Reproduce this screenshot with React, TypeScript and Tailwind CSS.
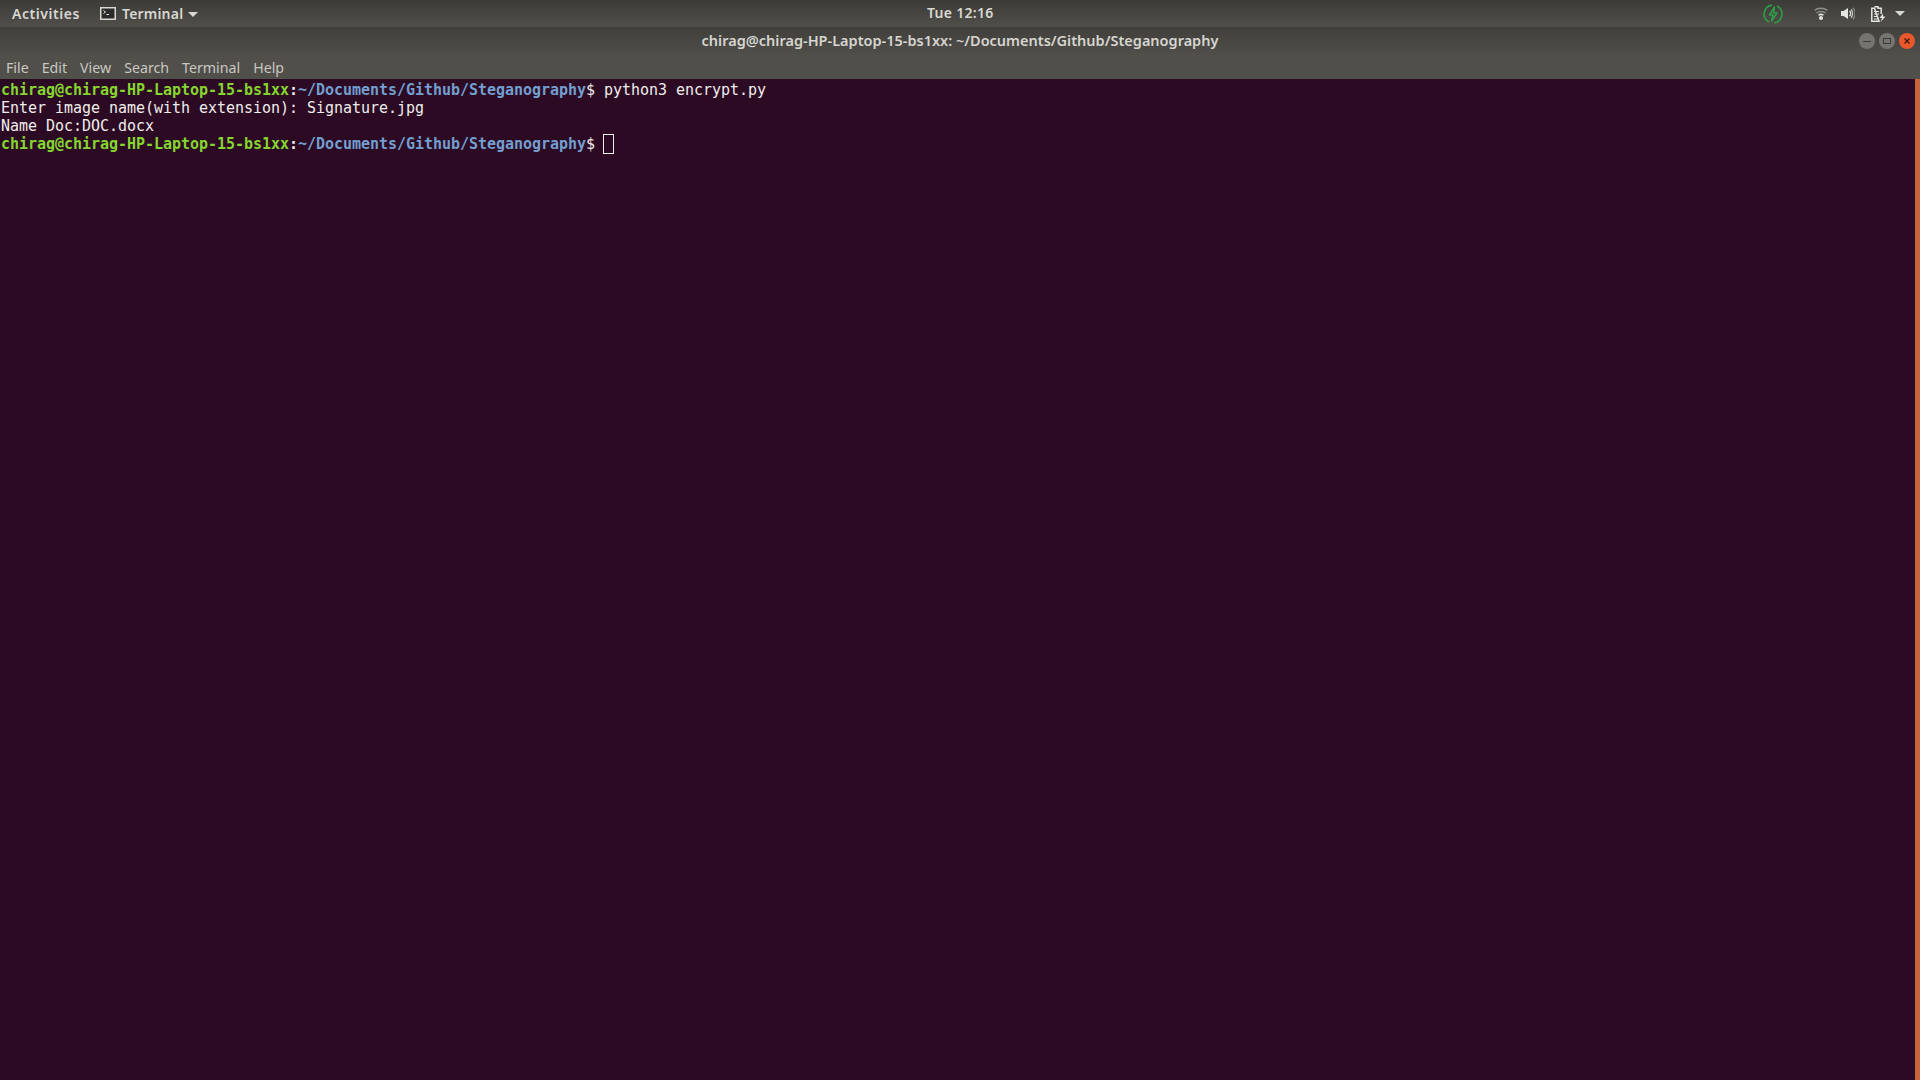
import React from 'react';

const mono = "font-['DejaVu_Sans_Mono',monospace] text-[15px] leading-[18px] tracking-[-0.03px] whitespace-pre";

function Prompt() {
  return (
    <>
      <span className="font-bold text-[#85d530]">chirag@chirag-HP-Laptop-15-bs1xx</span>
      <span className="font-bold text-[#eeeeec]">:</span>
      <span className="font-bold text-[#729fcf]">~/Documents/Github/Steganography</span>
      <span>$ </span>
    </>
  );
}

function TerminalIcon() {
  return (
    <svg width="16" height="13" viewBox="0 0 16 13" className="mr-[6px]">
      <rect x="0.75" y="0.75" width="14.5" height="11.5" fill="#2b2b29" stroke="#d8d8d4" strokeWidth="1.5" />
      <path d="M3.500 3.500l2 1.500-2 1.500M6.500 7.500h2.500" fill="none" stroke="#e8e8e4" strokeWidth="1" />
    </svg>
  );
}

function WifiIcon() {
  return (
    <svg width="14" height="13" viewBox="0 0 14 13">
      <path d="M0.500 3.500C4 0.500 10 0.500 13.500 3.500" fill="none" stroke="#8f8f8b" strokeWidth="1.500" />
      <path d="M2.500 6C5 4 9 4 11.500 6" fill="none" stroke="#8f8f8b" strokeWidth="1.500" />
      <path d="M4.500 8.200C6 7.200 8 7.200 9.500 8.200" fill="none" stroke="#e4e4e0" strokeWidth="1.500" />
      <circle cx="7" cy="11" r="2" fill="#e4e4e0" />
    </svg>
  );
}

function VolumeIcon() {
  return (
    <svg width="14" height="13" viewBox="0 0 14 13">
      <path d="M0 4h2.500L7 1v11L2.500 9H0z" fill="#e4e4e0" />
      <path d="M8.500 4a3.200 3.200 0 0 1 0 5" fill="none" stroke="#e4e4e0" strokeWidth="1.300" />
      <path d="M10 2.500a6 6 0 0 1 0 8" fill="none" stroke="#d0d0cc" strokeWidth="1.300" />
      <path d="M11.800 0.800a8.500 8.500 0 0 1 0 11.400" fill="none" stroke="#85857f" strokeWidth="1.300" />
    </svg>
  );
}

function BatteryIcon() {
  return (
    <svg width="15" height="16" viewBox="0 0 15 16">
      <path d="M3.500 0.800h3.500v1.500h3.200V8M8 15.200H0.800V2.300h2.700z" fill="none" stroke="#e4e4e0" strokeWidth="1.500" />
      <path d="M3 5.500h5M3 8h5M3 10.500h4M3 13h4" stroke="#e4e4e0" strokeWidth="1.100" />
      <path d="M12 7.500l-3.500 4.500H11l-1.500 4 5-5.500H12z" fill="#e4e4e0" />
    </svg>
  );
}

function BoltIcon() {
  return (
    <svg width="20" height="20" viewBox="0 0 20 20">
      <path d="M9 1.100A9 9 0 0 0 6 18M11 18.900A9 9 0 0 0 14 2" fill="none" stroke="#2e9e46" strokeWidth="1.600" />
      <path d="M11.500 3L6.500 11h3.500l-1.500 6 5.500-8h-3.500z" fill="none" stroke="#2e9e46" strokeWidth="1.500" strokeLinejoin="round" />
    </svg>
  );
}

function Caret() {
  return <span className="h-0 w-0 border-x-[5px] border-t-[5px] border-x-transparent border-t-[#d8d8d2]" />;
}

export default function App() {
  return (
    <div className="relative h-[1080px] w-[1920px] overflow-hidden bg-[#2d0a23]">
      {/* Top bar */}
      <div className="relative flex h-[27px] items-center bg-gradient-to-b from-[#3c3b37] to-[#504f4a] pr-[15px] font-['Noto_Sans',sans-serif] text-[14px] font-semibold text-[#d8d8d2]">
        <span className="ml-[12px] tracking-[0.55px]">Activities</span>
        <span className="ml-[20px] flex items-center">
          <TerminalIcon />
          <span className="tracking-[0.2px]">Terminal</span>
          <span className="ml-[5px] mt-[2px] flex"><Caret /></span>
        </span>
        <span className="absolute left-[927px] top-[2px] tracking-[0.3px]">Tue 12:16</span>
        <div className="ml-auto flex items-center">
          <BoltIcon />
          <span className="ml-[31px] flex"><WifiIcon /></span>
          <span className="ml-[13px] flex"><VolumeIcon /></span>
          <span className="ml-[16px] flex"><BatteryIcon /></span>
          <span className="ml-[9px] flex"><Caret /></span>
        </div>
      </div>

      {/* Title bar */}
      <div className="relative flex h-[29px] items-center justify-center bg-gradient-to-b from-[#403f3b] to-[#504f4a] font-['Noto_Sans',sans-serif] text-[14.5px] font-semibold text-[#d6d5cf]">
        <span className="mt-[-2px]">chirag@chirag-HP-Laptop-15-bs1xx: ~/Documents/Github/Steganography</span>
        <div className="absolute right-[5px] top-[6px] flex gap-[4px]">
          <span className="flex h-[16px] w-[16px] items-center justify-center rounded-full bg-[#75746f]">
            <span className="h-[1px] w-[8px] bg-[#3a3a37]" />
          </span>
          <span className="flex h-[16px] w-[16px] items-center justify-center rounded-full bg-[#75746f]">
            <span className="h-[6px] w-[8px] border border-[#3a3a37]" />
          </span>
          <span className="flex h-[16px] w-[16px] items-center justify-center rounded-full bg-[#e9582c]">
            <svg width="8" height="8" viewBox="0 0 8 8">
              <path d="M1.500 1.500l5 5M6.500 1.500l-5 5" stroke="#3a1a10" strokeWidth="1.200" />
            </svg>
          </span>
        </div>
      </div>

      {/* Menu bar */}
      <div className="flex h-[23px] items-center gap-[13px] bg-[#504f4a] pl-[6px] font-['Noto_Sans',sans-serif] text-[14.2px] text-[#c8c7c1]">
        <span>File</span>
        <span>Edit</span>
        <span>View</span>
        <span>Search</span>
        <span>Terminal</span>
        <span>Help</span>
      </div>

      {/* Terminal output */}
      <div className={`${mono} pl-[1px] pt-[2px] text-[#eeeeec]`}>
        <div><Prompt />python3 encrypt.py</div>
        <div>Enter image name(with extension): Signature.jpg</div>
        <div>Name Doc:DOC.docx</div>
        <div className="flex h-[18px] items-center">
          <span><Prompt /></span>
          <span className="ml-[-1px] h-[20px] w-[11px] shrink-0 border border-[#eeeeec]" />
        </div>
      </div>

      {/* Scrollbar */}
      <div className="absolute bottom-0 right-0 top-[79px] w-[5px] bg-[#c8643c]" />
    </div>
  );
}
